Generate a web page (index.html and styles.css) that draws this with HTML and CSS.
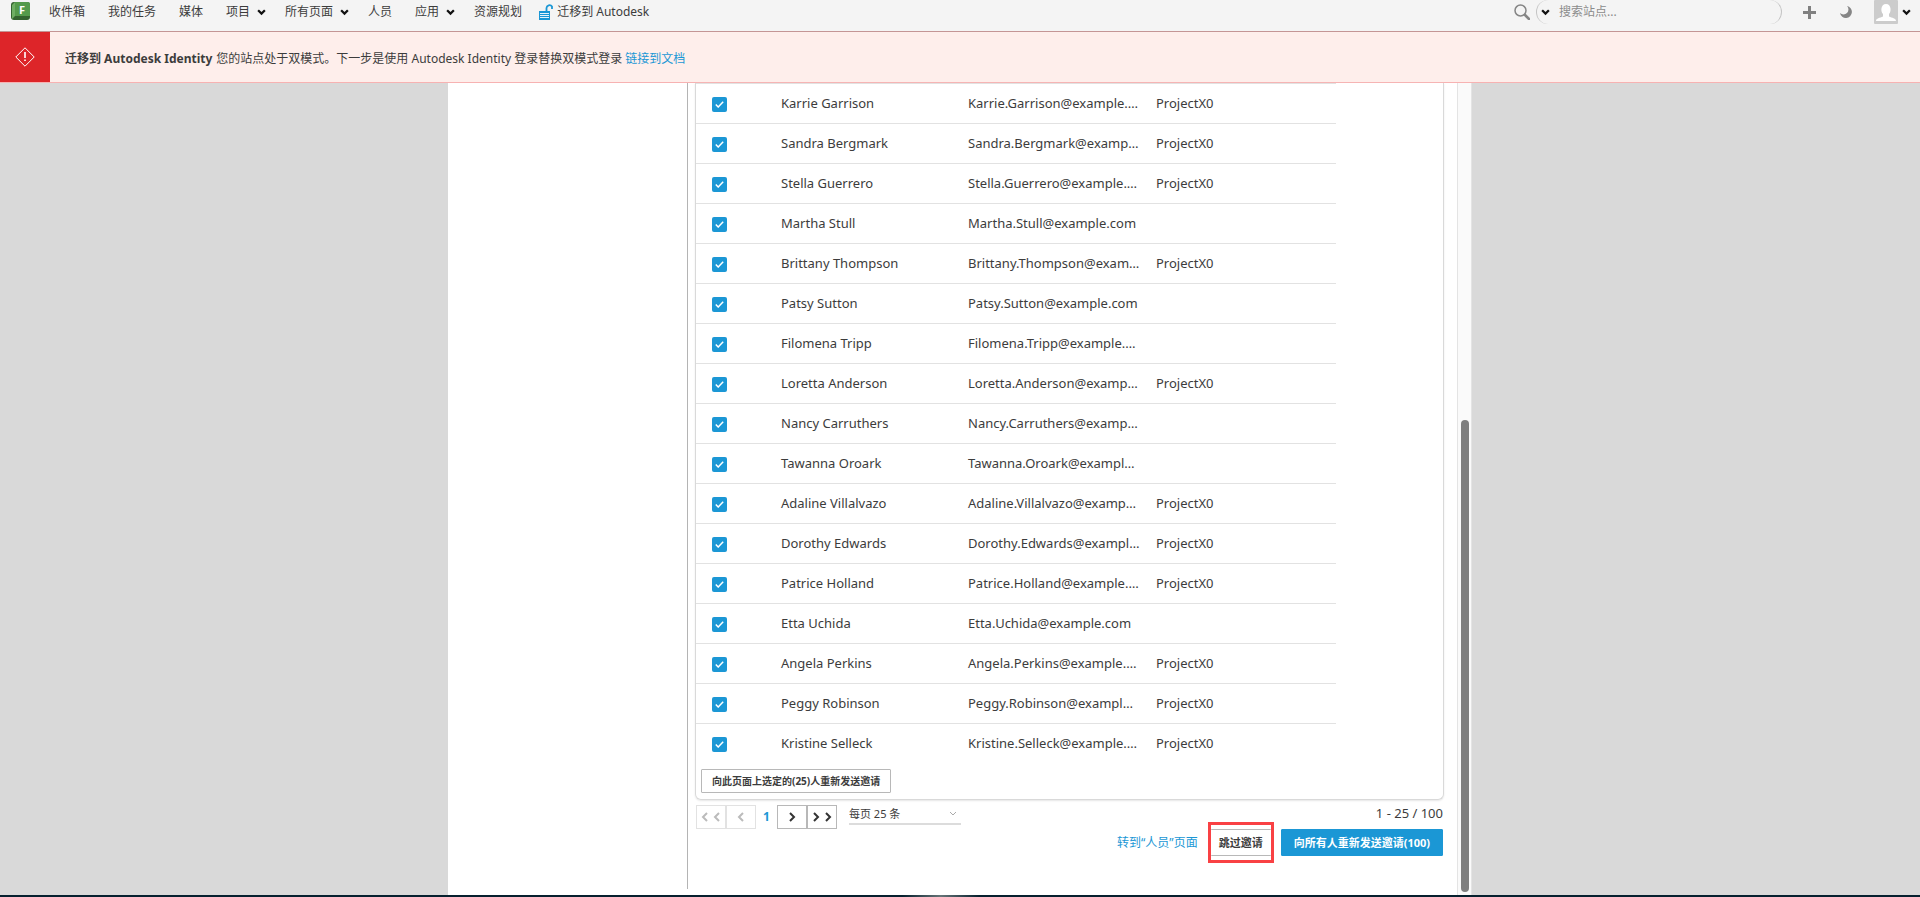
FILE: index.html
```html
<!DOCTYPE html>
<html lang="zh-CN">
<head>
<meta charset="utf-8">
<title>迁移到 Autodesk</title>
<link rel="stylesheet" href="styles.css">
</head>
<body>
<header class="topbar">
  <a class="logo" href="#" aria-label="F">
    <svg width="20" height="20" viewBox="0 0 20 20"><rect x="0" y="1" width="19" height="18" rx="3" fill="#34632f"/><path d="M4 1h13a2 2 0 0 1 2 2v12H4z" fill="#549a4b"/><path d="M1 4l3-3v14l-3 3z" fill="#6fae63"/><text class="logo-letter" x="8" y="13">F</text></svg>
  </a>
  <nav class="nav">
    <a href="#">收件箱</a>
    <a href="#">我的任务</a>
    <a href="#">媒体</a>
    <a class="drop" href="#">项目<svg class="chev" viewBox="0 0 8 6"><path d="M1 1l3 3 3-3"/></svg></a>
    <a class="drop" href="#">所有页面<svg class="chev" viewBox="0 0 8 6"><path d="M1 1l3 3 3-3"/></svg></a>
    <a href="#">人员</a>
    <a class="drop" href="#">应用<svg class="chev" viewBox="0 0 8 6"><path d="M1 1l3 3 3-3"/></svg></a>
    <a href="#">资源规划</a>
    <a class="migrate" href="#"><svg width="16" height="16" viewBox="0 0 16 16"><path d="M8.500 8V4a3 3 0 0 1 5.500-1.500V5" fill="none" stroke="#1b97d5" stroke-width="1.800"/><path d="M1 7h11v9H1z" fill="#1b97d5"/><path d="M2 9.500h9M2 11.500h9M2 13.500h9" stroke="#e8f4fb" stroke-width="1"/></svg>迁移到 Autodesk</a>
  </nav>
  <div class="tools">
    <svg width="16" height="16" viewBox="0 0 16 16"><circle cx="6.500" cy="6.500" r="5.500" fill="none" stroke="#858585" stroke-width="1.500"/><path d="M11 11l4 4" stroke="#858585" stroke-width="2.500" stroke-linecap="round"/></svg>
    <div class="search">
      <svg class="chev" viewBox="0 0 8 6"><path d="M1 1l3 3 3-3"/></svg>
      <input type="text" aria-label="搜索站点" placeholder="搜索站点...">
    </div>
    <button class="plain plus" aria-label="添加"><svg width="13" height="13" viewBox="0 0 13 13"><path d="M6.500 0v13M0 6.500h13" stroke="#808080" stroke-width="3"/></svg></button>
    <button class="plain moon" aria-label="深色模式"><svg width="12" height="12" viewBox="0 0 12 12"><path d="M7 0A6 6 0 1 1 0 7a4.200 4.200 0 0 0 7-7z" fill="#858585"/></svg></button>
    <button class="plain user" aria-label="用户"><svg width="24" height="24" viewBox="0 0 24 24"><rect width="24" height="24" rx="1" fill="#ccc"/><path d="M2 21c0-3 4-3 7-4.500V14C6.500 12 6.500 4 12 4s5.500 8 3 10v2.500c3 1.500 7 1.500 7 4.500z" fill="#fff"/></svg><svg class="chev" viewBox="0 0 8 6"><path d="M1 1l3 3 3-3"/></svg></button>
  </div>
</header>
<div class="alert" role="alert">
  <div class="alert-icon"><svg width="20" height="20" viewBox="0 0 20 20" fill="none" stroke="#fff"><path d="M10 .8L19.200 10 10 19.200.8 10z"/><path d="M10 5v6M10 12.500V14" stroke-width="1.600"/></svg></div>
  <p><strong>迁移到 Autodesk Identity</strong><span>您的站点处于双模式。下一步是使用 Autodesk Identity 登录替换双模式登录 <a href="#">链接到文档</a></span></p>
</div>
<main class="stage">
  <div class="sheet">
    <aside class="side"></aside>
    <section class="content">
      <div class="card">
        <table class="people">
          <tbody id="rows"></tbody>
        </table>
        <button class="btn resend">向此页面上选定的(25)人重新发送邀请</button>
      </div>
      <div class="pager">
        <button class="page" disabled aria-label="第一页"><svg width="20" height="10" viewBox="0 0 20 10"><path d="M6 1L2 5l4 4M18 1l-4 4 4 4"/></svg></button>
        <button class="page" disabled aria-label="上一页"><svg width="8" height="10" viewBox="0 0 8 10"><path d="M6 1L2 5l4 4"/></svg></button>
        <span class="current">1</span>
        <button class="page" aria-label="下一页"><svg width="8" height="10" viewBox="0 0 8 10"><path d="M2 1l4 4-4 4"/></svg></button>
        <button class="page" aria-label="最后一页"><svg width="20" height="10" viewBox="0 0 20 10"><path d="M2 1l4 4-4 4M14 1l4 4-4 4"/></svg></button>
        <div class="per-page">
          <select aria-label="每页条数"><option>每页 25 条</option></select>
          <svg width="8" height="6" viewBox="0 0 8 6"><path d="M1 1l3 3 3-3" fill="none" stroke="#aaa"/></svg>
        </div>
        <span class="range">1 - 25 / 100</span>
      </div>
      <div class="actions">
        <a href="#">转到“人员”页面</a>
        <div class="highlight"><button class="btn skip">跳过邀请</button></div>
        <button class="btn primary">向所有人重新发送邀请(100)</button>
      </div>
    </section>
    <div class="scroll"><div class="thumb"></div></div>
  </div>
</main>
<footer class="edge"></footer>
<script src="rows.js"></script>
</body>
</html>
```

FILE: styles.css
```css
* { box-sizing: border-box; }
body {
  margin: 0;
  min-height: 100vh;
  display: flex;
  flex-direction: column;
  background: #d9d9d9;
  color: #3c3c3c;
  font: 12px/16px "Noto Sans", "Noto Sans CJK SC", sans-serif;
}
a { color: #1b97d5; text-decoration: none; }
button, input, select { font: inherit; color: inherit; }
svg { display: block; flex: none; }

.topbar {
  display: flex;
  align-items: flex-start;
  height: 32px;
  padding: 0 9px 0 11px;
  background: #f4f4f4;
  border-bottom: 1px solid #c49595;
}
.logo { margin-top: 1px; }
.logo-letter { font: bold 11px "Noto Sans", sans-serif; fill: #fff; }
.nav { display: flex; align-items: center; height: 24px; margin-left: 18px; gap: 23px; }
.nav a { color: #3c3c3c; }
.drop { display: flex; align-items: center; gap: 7px; margin-right: -4px; }
.chev { width: 9px; height: 7px; fill: none; stroke: #111; stroke-width: 2; overflow: visible; }
.migrate { display: flex; align-items: center; gap: 3px; margin-left: -7px; }
.tools { display: flex; align-items: center; height: 24px; margin-left: auto; }
.search {
  display: flex;
  align-items: center;
  gap: 9px;
  width: 246px;
  height: 24px;
  margin-left: 6px;
  padding: 0 16px 0 4px;
  border-radius: 12px;
  border: 1px solid #c4c4c4;
  border-width: 0 1px;
}
.search input { flex: 1; min-width: 0; padding: 0; border: 0; background: none; outline: 0; }
.search input::placeholder { color: #8c8c8c; opacity: 1; }
.plain { display: flex; align-items: center; gap: 4px; padding: 0; border: 0; background: none; }
.plus { margin-left: 21px; }
.moon { margin-left: 24px; }
.user { margin-left: 22px; }

.alert {
  display: flex;
  align-items: stretch;
  height: 51px;
  background: #feeeeb;
  border-bottom: 1px solid #f7b2b2;
}
.alert-icon { display: grid; place-items: center; width: 50px; background: #dd2529; }
.alert p { display: flex; align-items: center; gap: 4px; margin: 0; padding: 4px 15px 0; }

.stage { display: flex; justify-content: center; flex: 1; }
.sheet { display: flex; width: 100%; max-width: 1024px; background: #fff; }
.side { flex: 0 0 240px; margin-bottom: 6px; border-right: 1px solid #b4b4b4; }
.content { flex: 1; min-width: 0; padding: 0 13px 0 7px; }
.card {
  padding-bottom: 6px;
  border: 1px solid #d9d9d9;
  border-top: 0;
  border-radius: 0 0 6px 6px;
  box-shadow: 0 1px 2px #e6e6e6;
}
.people {
  width: 640px;
  table-layout: fixed;
  border-collapse: separate;
  border-spacing: 0;
  font-size: 13px;
  line-height: 16px;
}
.people td { height: 40px; padding: 0 0 2px; border-top: 1px solid #e2e2e2; white-space: nowrap; }
.c-check { width: 85px; }
.people .c-check { padding: 0 0 0 16px; }
.c-name { width: 187px; }
.c-mail { width: 188px; }
.tick {
  display: block;
  width: 15px;
  height: 15px;
  margin: 2px 0 0;
  appearance: none;
  border-radius: 2px;
  background: #1b97d5;
}
.tick-wrap { display: grid; width: 15px; }
.tick-wrap > * { grid-area: 1 / 1; }
.tick-wrap svg { align-self: center; justify-self: center; margin-top: 1px; pointer-events: none; }

.btn {
  padding: 0 10px;
  border: 1px solid #b8b8b8;
  border-radius: 1px;
  background: #fff;
  font-weight: bold;
  font-size: 11px;
  white-space: nowrap;
}
.resend { display: block; height: 24px; margin: 6px 0 0 5px; font-size: 10px; }
.pager { display: flex; align-items: center; height: 24px; margin-top: 5px; }
.page {
  display: grid;
  place-items: center;
  width: 30px;
  height: 24px;
  padding: 0;
  border: 1px solid #b8b8b8;
  background: #fff;
}
.page:first-child { margin-left: 1px; }
.page svg { fill: none; stroke: #333; stroke-width: 2; }
.page:disabled { border-color: #e2e2e2; }
.page:disabled svg { stroke: #bbb; }
.current { width: 21px; text-align: center; color: #1b97d5; font-weight: bold; }
.per-page {
  display: flex;
  align-items: center;
  align-self: flex-start;
  width: 112px;
  height: 20px;
  margin-left: 12px;
  padding-right: 4px;
  border-bottom: 2px solid #dcdcdc;
}
.per-page select { flex: 1; padding: 0; border: 0; appearance: none; background: none; font-size: 11px; }
.range { margin-left: auto; align-self: flex-start; padding-right: 1px; font-size: 13px; }
.actions { display: flex; justify-content: flex-end; align-items: center; margin-top: -7px; padding-right: 1px; }
.highlight { margin: 0 7px 0 10px; padding: 4px 0; border: 3px solid #f94144; }
.skip { display: block; height: 27px; padding: 0 8px; border-width: 1px 0; }
.primary { height: 27px; padding: 0 12px; border-color: #1b97d5; background: #1b97d5; color: #fff; }

.scroll { flex: 0 0 15px; display: flex; flex-direction: column; justify-content: flex-end; align-items: center; padding-bottom: 3px; background: #fafafa; border: 1px solid #e4e4e4; border-width: 0 1px; }
.thumb { width: 8px; height: 58.4%; border-radius: 4px; background: #7f7f7f; }
.edge { height: 2px; background: linear-gradient(90deg, #06202e 0 47%, #667477 49%, #06202e 51%); }
```

FILE: rows.js
```js
const people = [
  ["Karrie Garrison", "Karrie.Garrison@example.…", "ProjectX0"],
  ["Sandra Bergmark", "Sandra.Bergmark@examp…", "ProjectX0"],
  ["Stella Guerrero", "Stella.Guerrero@example.…", "ProjectX0"],
  ["Martha Stull", "Martha.Stull@example.com", ""],
  ["Brittany Thompson", "Brittany.Thompson@exam…", "ProjectX0"],
  ["Patsy Sutton", "Patsy.Sutton@example.com", ""],
  ["Filomena Tripp", "Filomena.Tripp@example.…", ""],
  ["Loretta Anderson", "Loretta.Anderson@examp…", "ProjectX0"],
  ["Nancy Carruthers", "Nancy.Carruthers@examp…", ""],
  ["Tawanna Oroark", "Tawanna.Oroark@exampl…", ""],
  ["Adaline Villalvazo", "Adaline.Villalvazo@examp…", "ProjectX0"],
  ["Dorothy Edwards", "Dorothy.Edwards@exampl…", "ProjectX0"],
  ["Patrice Holland", "Patrice.Holland@example.…", "ProjectX0"],
  ["Etta Uchida", "Etta.Uchida@example.com", ""],
  ["Angela Perkins", "Angela.Perkins@example.…", "ProjectX0"],
  ["Peggy Robinson", "Peggy.Robinson@exampl…", "ProjectX0"],
  ["Kristine Selleck", "Kristine.Selleck@example.…", "ProjectX0"]
];
document.getElementById("rows").innerHTML = people.map(([name, mail, project], i) => `
  <tr>
    <td class="c-check"><span class="tick-wrap"><input class="tick" type="checkbox" id="p${i}" checked><svg width="9" height="7" viewBox="0 0 9 7"><path d="M.8 3.500L3.200 6 8.200.8" fill="none" stroke="#fff" stroke-width="1.500"/></svg></span></td>
    <td class="c-name"><label for="p${i}">${name}</label></td>
    <td class="c-mail">${mail}</td>
    <td>${project}</td>
  </tr>`).join("");
```
